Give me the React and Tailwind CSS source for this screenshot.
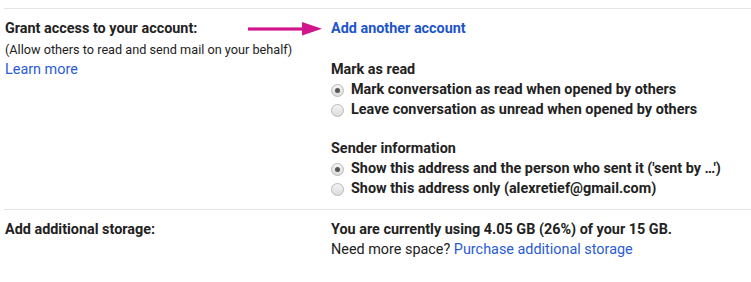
function Radio({ checked }) {
  return (
    <span className="flex h-[13px] w-[13px] shrink-0 items-center justify-center rounded-full border border-[#b9b9b9] bg-gradient-to-b from-[#f4f4f4] to-[#dcdcdc]">
      {checked && <span className="h-[5px] w-[5px] rounded-full bg-[#555]" />}
    </span>
  );
}

function Option({ checked, children }) {
  return (
    <label className="flex h-5 items-center gap-[7px] font-bold">
      <Radio checked={checked} />
      <span>{children}</span>
    </label>
  );
}

function Arrow() {
  return (
    <svg width="74" height="14" viewBox="0 0 74 14" className="absolute left-[-83px] top-[3px]">
      <rect x="0" y="5.4" width="58" height="3.2" fill="#d1168d" />
      <path d="M54 0 L74 6.8 L54 13.5 Z" fill="#d1168d" />
    </svg>
  );
}

export default function App() {
  return (
    <div className="min-h-[282px] bg-white pl-[4px] pt-[8px] text-[14.4px] text-[#222] [font-family:Roboto,'Liberation_Sans',sans-serif]">
      <div className="flex border-t border-[#e5e5e5] pb-[10px] pt-[10px]">
        <div className="w-[327px] shrink-0 pl-[1px]">
          <div className="font-bold leading-5">Grant access to your account:</div>
          <div className="text-[12.7px] leading-[21px]">(Allow others to read and send mail on your behalf)</div>
          <a href="#" className="block leading-[19px] text-[#2a5bd7]">Learn more</a>
        </div>
        <div className="relative">
          <Arrow />
          <a href="#" className="block font-bold leading-5 text-[#1d55c8]">Add another account</a>
          <div className="mt-[21px] font-bold leading-5">Mark as read</div>
          <Option checked>Mark conversation as read when opened by others</Option>
          <Option>Leave conversation as unread when opened by others</Option>
          <div className="mt-[19px] font-bold leading-5">Sender information</div>
          <Option checked>Show this address and the person who sent it ('sent by …')</Option>
          <Option>Show this address only (alexretief@gmail.com)</Option>
        </div>
      </div>
      <div className="flex border-t border-[#e5e5e5] pt-[10px]">
        <div className="w-[327px] shrink-0 pl-[1px] font-bold leading-5">Add additional storage:</div>
        <div>
          <div className="font-bold leading-5">You are currently using 4.05 GB (26%) of your 15 GB.</div>
          <div className="leading-[19px]">
            Need more space? <a href="#" className="text-[#2a5bd7]">Purchase additional storage</a>
          </div>
        </div>
      </div>
    </div>
  );
}
